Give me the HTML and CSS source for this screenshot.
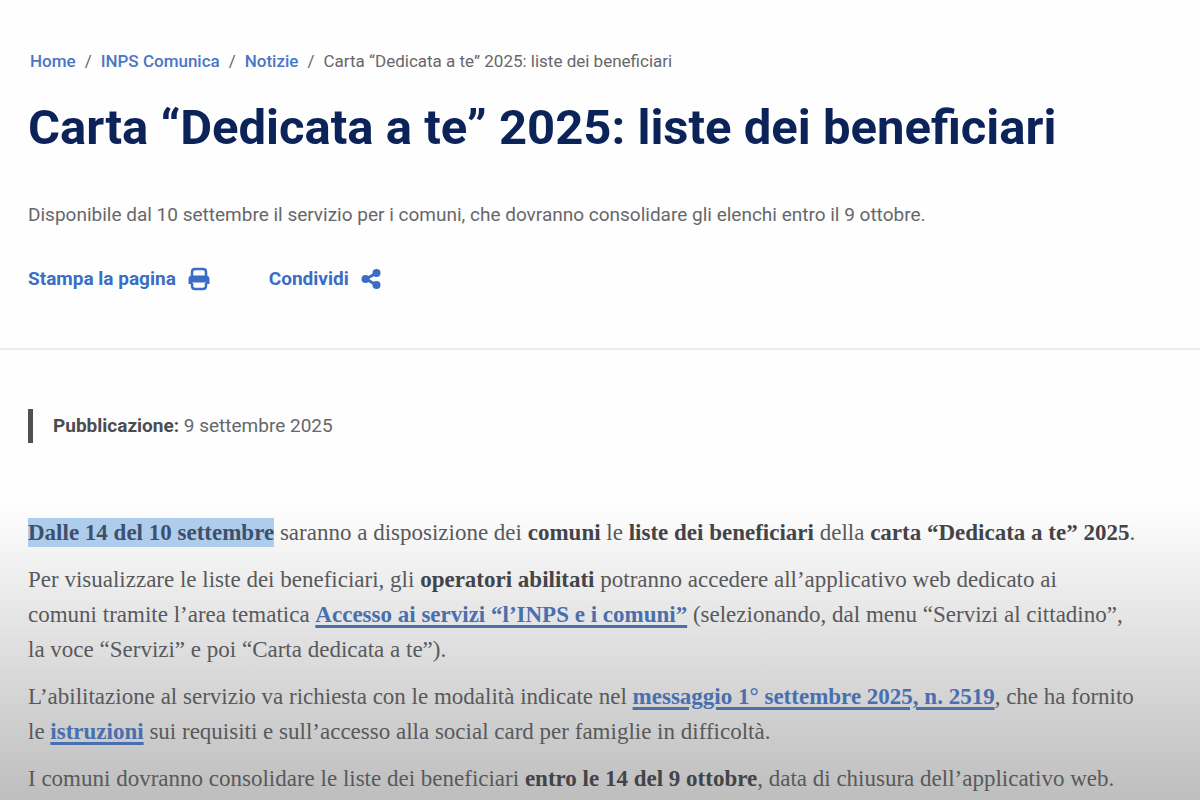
FILE: index.html
```html
<!DOCTYPE html>
<html lang="it">
<head>
<meta charset="utf-8">
<meta name="viewport" content="width=device-width, initial-scale=1">
<title>Carta “Dedicata a te” 2025: liste dei beneficiari</title>
<link rel="stylesheet" href="styles.css">
</head>
<body>
<header class="page-header">
  <nav class="breadcrumb" aria-label="Percorso">
    <a href="#">Home</a><span class="separator">/</span><a href="#">INPS Comunica</a><span class="separator">/</span><a href="#">Notizie</a><span class="separator">/</span><span class="current">Carta “Dedicata a te” 2025: liste dei beneficiari</span>
  </nav>
  <h1 class="title">Carta “Dedicata a te” 2025: liste dei beneficiari</h1>
  <p class="summary">Disponibile dal 10 settembre il servizio per i comuni, che dovranno consolidare gli elenchi entro il 9 ottobre.</p>
  <div class="actions">
    <button class="action" type="button">Stampa la pagina
      <svg class="icon-print" viewBox="0 0 22 24" aria-hidden="true"><path d="M4 9V5Q4 2 7 2H15Q18 2 18 5V9M4 16V19Q4 22 7 22H15Q18 22 18 19V16" fill="none" stroke="currentColor" stroke-width="2.500"/><path d="M4 8.500H18Q21.500 8.500 21.500 12V17H18V15.500H4V17H0.500V12Q0.500 8.500 4 8.500Z" fill="currentColor"/></svg>
    </button>
    <button class="action" type="button">Condividi
      <svg class="icon-share" viewBox="0 0 20 22" aria-hidden="true"><path d="M15.500 5L5 11L15.500 17" fill="none" stroke="currentColor" stroke-width="3"/><circle cx="15.500" cy="5" r="4" fill="currentColor"/><circle cx="4.500" cy="11" r="4" fill="currentColor"/><circle cx="15.500" cy="17" r="4" fill="currentColor"/></svg>
    </button>
  </div>
</header>
<main class="content">
  <p class="published"><strong>Pubblicazione:</strong> 9 settembre 2025</p>
  <article class="article">
    <p><mark>Dalle 14 del 10 settembre</mark> saranno a disposizione dei <strong>comuni</strong> le <strong>liste dei beneficiari</strong> della <strong>carta “Dedicata a te” 2025</strong>.</p>
    <p>Per visualizzare le liste dei beneficiari, gli <strong>operatori abilitati</strong> potranno accedere all’applicativo web dedicato ai<br>comuni tramite l’area tematica <a href="#">Accesso ai servizi “l’INPS e i comuni”</a> (selezionando, dal menu “Servizi al cittadino”,<br>la voce “Servizi” e poi “Carta dedicata a te”).</p>
    <p>L’abilitazione al servizio va richiesta con le modalità indicate nel <a href="#">messaggio 1° settembre 2025, n. 2519</a>, che ha fornito<br>le <a href="#">istruzioni</a> sui requisiti e sull’accesso alla social card per famiglie in difficoltà.</p>
    <p>I comuni dovranno consolidare le liste dei beneficiari <strong>entro le 14 del 9 ottobre</strong>, data di chiusura dell’applicativo web.</p>
  </article>
</main>
</body>
</html>
```
FILE: styles.css
```css
* { box-sizing: border-box; }
body { margin: 0; background: #fefefe; color: #66676a; font-family: Roboto, sans-serif; }
p, h1 { margin: 0; }
.page-header { padding: 48px 28px 55px; border-bottom: 2px solid #ececee; }
.breadcrumb { display: flex; flex-wrap: wrap; font-size: 17px; line-height: 26px; padding-left: 2px; }
.breadcrumb a { color: #4b76c5; font-weight: 500; text-decoration: none; }
.separator { margin: 0 9px; }
.title { margin-top: 16px; font-size: 49px; line-height: 76px; font-weight: 700; color: #0b2359; }
.summary { margin-top: 33px; font-size: 19px; line-height: 32px; }
.actions { display: flex; gap: 59px; margin-top: 34px; }
.action { display: flex; align-items: center; gap: 12px; padding: 0; border: 0; background: none; color: #3a6dc5; font: inherit; font-size: 19px; line-height: 28px; font-weight: 700; cursor: pointer; }
.icon-print { width: 22px; height: 24px; }
.icon-share { width: 20px; height: 22px; }
.content { padding: 59px 28px 7px; background: linear-gradient(#fefefe 154px, #bdbdbd 100%); }
.published { padding-left: 20px; border-left: 5px solid #505154; font-size: 19px; line-height: 34px; }
.published strong { color: #4b4c50; }
.article { display: flex; flex-direction: column; gap: 12px; margin-top: 72px; font-family: "Liberation Serif", serif; font-size: 23px; line-height: 35px; color: #58595c; }
.article strong { color: #434448; }
.article a { color: #496fae; font-weight: 700; text-decoration-thickness: 3px; text-underline-offset: 3px; }
.article mark { padding: 2px 0; background: #aecded; color: #3e506c; font-weight: 700; }
```
